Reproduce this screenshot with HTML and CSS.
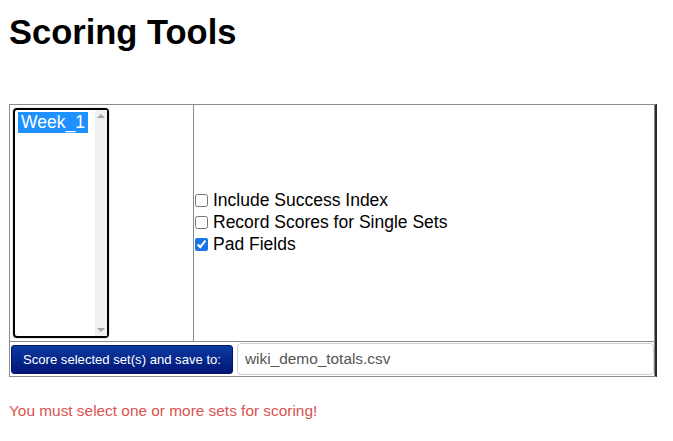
FILE: index.html
```html
<!DOCTYPE html>
<html>
<head>
<meta charset="utf-8">
<title>Scoring Tools</title>
<link rel="stylesheet" href="styles.css">
</head>
<body>
<h1 class="title">Scoring Tools</h1>
<table class="tools">
  <tr>
    <td class="sets-cell">
      <div class="listbox">
        <div class="options">
          <span class="option selected">Week_1</span>
        </div>
        <div class="scrollbar">
          <span class="arrow up"></span>
          <span class="arrow down"></span>
        </div>
      </div>
    </td>
    <td class="opts-cell">
      <label class="check"><input type="checkbox"><span>Include Success Index</span></label>
      <label class="check"><input type="checkbox"><span>Record Scores for Single Sets</span></label>
      <label class="check"><input type="checkbox" checked><span>Pad Fields</span></label>
    </td>
  </tr>
  <tr>
    <td class="action-cell" colspan="2">
      <div class="action-row">
        <button class="score-btn" type="button">Score selected set(s) and save to:</button>
        <input class="filename" type="text" value="wiki_demo_totals.csv">
      </div>
    </td>
  </tr>
</table>
<p class="error">You must select one or more sets for scoring!</p>
</body>
</html>
```

FILE: styles.css
```css
html, body {
  margin: 0;
  padding: 0;
  background: #fff;
}
body {
  font-family: "Liberation Sans", Arial, sans-serif;
  color: #000;
  padding: 0 9px;
}
.title {
  font-size: 34.5px;
  font-weight: bold;
  line-height: 40px;
  margin: 12px 0 52px;
}
.tools {
  border-collapse: separate;
  border-spacing: 0;
  width: 648px;
  border-top: 1px solid #8a8a8a;
  border-left: 1px solid #8a8a8a;
  border-bottom: 1px solid #8a8a8a;
  border-right: 2px solid #2a2a2a;
}
.tools td {
  padding: 0;
}
.sets-cell {
  width: 180px;
  padding: 3px 0 3px 3px !important;
  border-right: 1px solid #8a8a8a;
  border-bottom: 1px solid #8a8a8a;
  vertical-align: top;
}
.opts-cell {
  border-right: 1px solid #8a8a8a;
  border-bottom: 1px solid #8a8a8a;
  vertical-align: middle;
  padding: 0 0 3px 1px !important;
}
.listbox {
  width: 92px;
  height: 226px;
  border: 2px solid #000;
  border-radius: 4px;
  box-shadow: 0 0 0 1px #e8e8e8;
  display: flex;
  background: #fff;
}
.options {
  flex: 1;
  padding: 2px 0 0 3px;
}
.option {
  display: inline-block;
  font-size: 17.5px;
  line-height: 21px;
  padding: 0 3px;
  color: #fff;
}
.option.selected {
  background: #1e90ff;
}
.scrollbar {
  width: 12px;
  background: #f1f1f1;
  display: flex;
  flex-direction: column;
  justify-content: space-between;
  align-items: center;
  padding: 4px 0;
}
.arrow {
  width: 0;
  height: 0;
  border-left: 4px solid transparent;
  border-right: 4px solid transparent;
}
.arrow.up {
  border-bottom: 4px solid #a3a3a3;
}
.arrow.down {
  border-top: 4px solid #a3a3a3;
}
.check {
  display: flex;
  align-items: center;
  font-size: 17.5px;
  line-height: 22px;
  height: 22px;
}
.check input {
  margin: 2px 5px 0 0;
  width: 13px;
  height: 13px;
  accent-color: #1a73e8;
}
.action-cell {
  border-right: 1px solid #8a8a8a;
  padding: 1px 0 1px 1px !important;
}
.action-row {
  display: flex;
  align-items: center;
  gap: 4px;
}
.score-btn {
  width: 222px;
  height: 29px;
  font-family: "Liberation Sans", Arial, sans-serif;
  font-size: 13.1px;
  color: #fff;
  background: linear-gradient(#0b3aa0, #001577);
  border: 1px solid #001466;
  border-radius: 3px;
  padding: 0 10px;
}
.filename {
  flex: 1;
  height: 32px;
  box-sizing: border-box;
  border: 1px solid #cfcfcf;
  border-radius: 4px;
  padding: 0 7px;
  font-family: "Liberation Sans", Arial, sans-serif;
  font-size: 15.4px;
  color: #555;
}
.error {
  margin: 25px 0 0;
  font-size: 15.4px;
  line-height: 17px;
  color: #d9534f;
}
```
